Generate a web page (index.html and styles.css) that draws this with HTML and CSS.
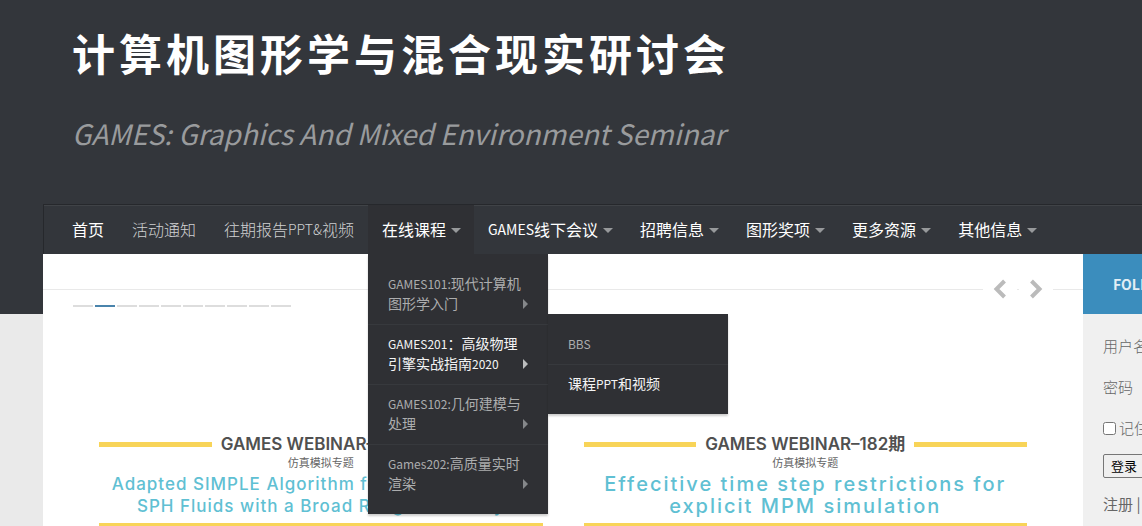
FILE: index.html
```html
<!DOCTYPE html>
<html lang="zh-CN">
<head>
<meta charset="utf-8">
<title>计算机图形学与混合现实研讨会</title>
<link rel="stylesheet" href="styles.css">
</head>
<body>
<div class="page">
  <header class="site-header">
    <h1 class="site-title">计算机图形学与混合现实研讨会</h1>
    <p class="site-tagline">GAMES: Graphics And Mixed Environment Seminar</p>
  </header>

  <nav class="nav">
    <ul class="nav-list">
      <li class="nav-item"><a class="nav-link" href="#">首页</a></li>
      <li class="nav-item"><a class="nav-link muted" href="#">活动通知</a></li>
      <li class="nav-item"><a class="nav-link muted" href="#">往期报告<span class="latin">PPT&amp;</span>视频</a></li>
      <li class="nav-item open">
        <a class="nav-link" href="#">在线课程<span class="caret"></span></a>
        <ul class="menu">
          <li class="menu-item"><a class="menu-link" href="#"><span class="latin">GAMES101:</span>现代计算机图形学入门<span class="arrow"></span></a></li>
          <li class="menu-item">
            <a class="menu-link active" href="#"><span class="latin">GAMES201</span>：高级物理引擎实战指南<span class="latin">2020</span><span class="arrow"></span></a>
            <ul class="menu submenu">
              <li class="menu-item"><a class="menu-link" href="#"><span class="latin">BBS</span></a></li>
              <li class="menu-item"><a class="menu-link active" href="#">课程<span class="latin">PPT</span>和视频</a></li>
            </ul>
          </li>
          <li class="menu-item"><a class="menu-link" href="#"><span class="latin">GAMES102:</span>几何建模与处理<span class="arrow"></span></a></li>
          <li class="menu-item"><a class="menu-link" href="#"><span class="latin">Games202:</span>高质量实时渲染<span class="arrow"></span></a></li>
        </ul>
      </li>
      <li class="nav-item"><a class="nav-link" href="#"><span class="latin">GAMES</span>线下会议<span class="caret"></span></a></li>
      <li class="nav-item"><a class="nav-link" href="#">招聘信息<span class="caret"></span></a></li>
      <li class="nav-item"><a class="nav-link" href="#">图形奖项<span class="caret"></span></a></li>
      <li class="nav-item"><a class="nav-link" href="#">更多资源<span class="caret"></span></a></li>
      <li class="nav-item"><a class="nav-link" href="#">其他信息<span class="caret"></span></a></li>
    </ul>
  </nav>

  <div class="columns">
    <main class="content">
      <div class="slider-bar">
        <span class="rule"></span>
        <button class="slide-button" aria-label="Previous"><svg width="14" height="20" viewBox="0 0 14 20"><path d="M11.5 2 3.500 10l8 8" fill="none" stroke="#bbb" stroke-width="4"/></svg></button>
        <span class="rule dash"></span>
        <button class="slide-button" aria-label="Next"><svg width="14" height="20" viewBox="0 0 14 20"><path d="M2.500 2l8 8-8 8" fill="none" stroke="#bbb" stroke-width="4"/></svg></button>
        <span class="rule end"></span>
      </div>
      <div class="pager">
        <span></span><span class="current"></span><span></span><span></span><span></span><span></span><span></span><span></span><span></span><span></span>
      </div>
      <div class="slides">
        <article class="slide">
          <h2 class="slide-title">GAMES WEBINAR–183期</h2>
          <p class="slide-topic">仿真模拟专题</p>
          <p class="slide-text">Adapted SIMPLE Algorithm for Incompressible<br>SPH Fluids with a Broad Range Viscosity</p>
        </article>
        <article class="slide">
          <h2 class="slide-title">GAMES WEBINAR–182期</h2>
          <p class="slide-topic">仿真模拟专题</p>
          <p class="slide-text large">Effecitive time step restrictions for<br>explicit MPM simulation</p>
        </article>
      </div>
    </main>

    <aside class="sidebar">
      <h2 class="follow">FOLLOW:</h2>
      <form class="login">
        <div class="field">
          <label class="field-label" for="user">用户名</label>
          <input class="field-input" type="text" id="user">
        </div>
        <div class="field">
          <label class="field-label" for="password">密码</label>
          <input class="field-input" type="password" id="password">
        </div>
        <label class="remember"><input type="checkbox" class="check">记住我</label>
        <button type="button" class="submit">登录</button>
        <p class="links"><a href="#">注册</a> | <a href="#">忘记密码</a></p>
      </form>
    </aside>
  </div>
</div>
</body>
</html>
```
FILE: styles.css
```css
* { box-sizing: border-box; }

body {
  margin: 0;
  background: #eaeaea;
  font-family: "Noto Sans CJK SC", "Noto Sans", sans-serif;
  font-size: 16px;
}

h1, h2, p, ul { margin: 0; padding: 0; font-weight: 400; }
ul { list-style: none; }
a { color: inherit; text-decoration: none; }

.page {
  min-height: 100vh;
  padding-left: 43px;
  overflow: hidden;
  background: linear-gradient(#33363b 314px, #eaeaea 314px);
}

.site-header { padding: 22px 29px 46px; }

.site-title {
  color: #fff;
  font-size: 43px;
  font-weight: 700;
  line-height: 60px;
  letter-spacing: 4px;
  white-space: nowrap;
}

.site-tagline {
  margin-top: 26px;
  color: #999b9d;
  font-size: 28px;
  font-style: italic;
  line-height: 50px;
  white-space: nowrap;
}

.nav {
  border-top: 1px solid #26282c;
  border-left: 1px solid #26282c;
  box-shadow: inset 0 1px #404347;
}

.nav-list { display: flex; padding-left: 14px; }
.nav-item { position: relative; }
.nav-item.open { background: #2f3034; }

.nav-link {
  display: flex;
  align-items: center;
  height: 49px;
  padding: 0 14px 2px;
  color: #fff;
  white-space: nowrap;
}

.nav-link.muted { color: #cfd0d1; font-weight: 300; }
.latin { line-height: 1; }
.nav-link .latin { font-size: 14px; }

.caret {
  margin-top: 4px;
  margin-left: 5px;
  margin-right: -1px;
  border: 5px solid transparent;
  border-top-color: #97999b;
  border-bottom: 0;
}

.menu {
  position: absolute;
  z-index: 2;
  top: 100%;
  left: 0;
  width: 180px;
  padding: 10px 0;
  background: #2f3034;
  box-shadow: 0 2px 2px rgba(0, 0, 0, 0.2);
}

.menu-item { position: relative; }
.menu-item + .menu-item { box-shadow: inset 0 1px #37393d; }

.submenu { top: -10px; left: 100%; }

.menu-link {
  display: block;
  position: relative;
  padding: 9px 24px 11px 20px;
  color: #acadae;
  font-size: 14px;
  line-height: 20px;
}

.menu-link .latin { font-size: 12px; }
.menu-link.active { color: #f4f4f4; }

.arrow {
  position: absolute;
  right: 20px;
  bottom: 15px;
  border: 5px solid transparent;
  border-left-color: #85878a;
  border-right: 0;
}

.active .arrow { border-left-color: #bcbdbe; }

.columns {
  display: grid;
  grid-template-columns: minmax(0, 1fr) 59px;
  min-height: 272px;
}

.content { background: #fff; }

.slider-bar { display: flex; align-items: center; padding-top: 25px; }
.rule { flex: 1; height: 1px; background: #e9e9e9; }
.rule.dash { flex: 0 0 2px; }
.rule.end { flex: 0 0 30px; }

.slide-button {
  display: flex;
  margin: 0 9px;
  padding: 0;
  border: 0;
  background: none;
}

.slide-button svg { width: 16px; }

.pager { display: flex; gap: 2px; padding: 6px 30px 0; }
.pager span { width: 20px; height: 2px; background: #ddd; }
.pager .current { background: #4a84ac; }

.slides {
  display: grid;
  grid-template-columns: 1fr 1fr;
  gap: 41px;
  padding: 126px 56px 0;
}

.slide {
  border-bottom: 5px solid #f8d458;
  font-family: Inter, "Noto Sans CJK SC", sans-serif;
  text-align: center;
  white-space: nowrap;
}

.slide-title {
  display: flex;
  align-items: center;
  gap: 9px;
  color: #505050;
  font-size: 17px;
  font-weight: 600;
  line-height: 22px;
}

.slide-title::before, .slide-title::after {
  content: "";
  flex: 1;
  height: 5px;
  background: #f8d458;
}

.slide-topic { color: #666; font-size: 11px; line-height: 16px; }

.slide-text {
  color: #5fc0d3;
  font-size: 17px;
  font-weight: 500;
  letter-spacing: 1px;
  line-height: 22px;
  padding: 2px 0 6px;
}

.slide-text.large { font-size: 20px; letter-spacing: 2px; }

.sidebar { overflow: hidden; background: #f0f0f0; white-space: nowrap; }

.follow {
  padding-left: 30px;
  background: #3b8dbd;
  color: #e2eef5;
  font-size: 14px;
  font-weight: 700;
  line-height: 60px;
}

.login {
  display: flex;
  flex-direction: column;
  align-items: flex-start;
  padding: 20px 20px 0;
  color: #666;
  font-size: 15px;
  font-weight: 300;
  line-height: 24px;
}

.field { display: flex; align-items: center; margin-bottom: 17px; }
.field-label { width: 60px; flex-shrink: 0; }
.field-input { width: 160px; height: 24px; border: 1px solid #ddd; }
.remember { display: flex; align-items: center; gap: 3px; }
.check { width: 13px; height: 13px; margin: 0; }

.submit {
  height: 24px;
  margin: 14px 0;
  padding: 0 7px;
  border: 1px solid #767676;
  border-radius: 2px;
  background: #efefef;
  color: #000;
  font-family: inherit;
  font-size: 13px;
  line-height: 20px;
}
```
